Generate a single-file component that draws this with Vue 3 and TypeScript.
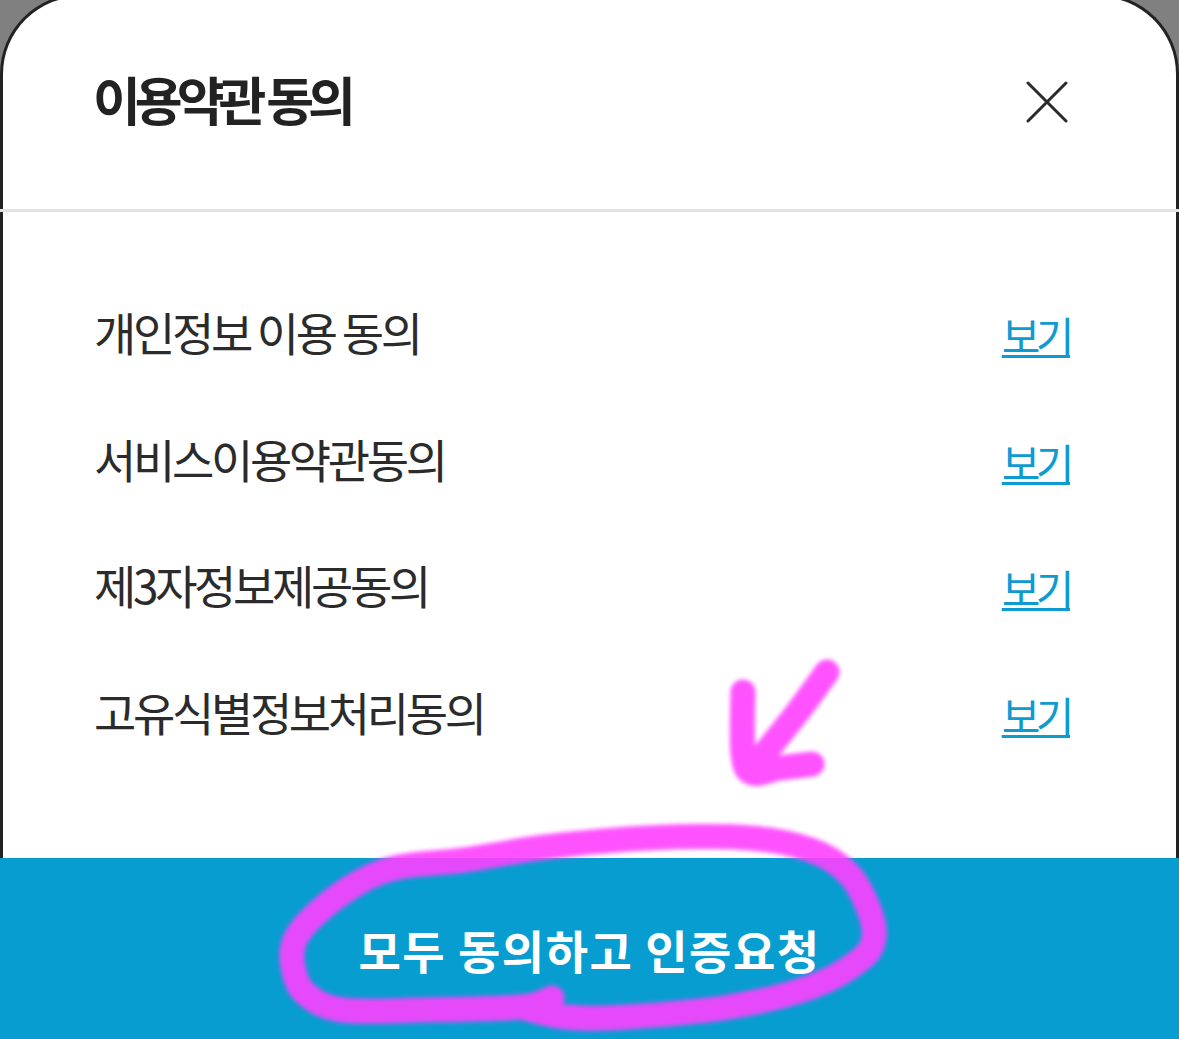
<script setup lang="ts">
type Pt = [number, number]

const terms: string[] = [
  '개인정보 이용 동의',
  '서비스이용약관동의',
  '제3자정보제공동의',
  '고유식별정보처리동의',
]

function smooth(pts: Pt[]): string {
  let d = `M${pts[0][0]} ${pts[0][1]}`
  for (let i = 0; i < pts.length - 1; i++) {
    const p0 = pts[Math.max(i - 1, 0)]
    const p1 = pts[i]
    const p2 = pts[i + 1]
    const p3 = pts[Math.min(i + 2, pts.length - 1)]
    const c1x = p1[0] + (p2[0] - p0[0]) / 6
    const c1y = p1[1] + (p2[1] - p0[1]) / 6
    const c2x = p2[0] - (p3[0] - p1[0]) / 6
    const c2y = p2[1] - (p3[1] - p1[1]) / 6
    d += ` C${c1x.toFixed(1)} ${c1y.toFixed(1)} ${c2x.toFixed(1)} ${c2y.toFixed(1)} ${p2[0]} ${p2[1]}`
  }
  return d
}

const ring = smooth([
  [552, 998], [521, 1007], [423, 1010], [342, 1010], [305, 993], [293, 967], [295, 940],
  [317, 913], [358, 883], [399, 867], [464, 860], [546, 847], [648, 838], [750, 838],
  [811, 850], [848, 873], [868, 907], [874, 937], [860, 960], [811, 987], [729, 1007],
  [627, 1017], [566, 1017], [521, 1007],
])
const arrowShaft = smooth([[827, 672], [797, 713], [757, 763]])
const arrowHead = smooth([[743, 692], [743, 753], [752, 773], [780, 768], [812, 764]])
</script>

<template>
  <div class="page">
    <section class="sheet">
      <header class="head">
        <h1 class="title">이용약관 동의</h1>
        <button class="close" type="button" aria-label="닫기">
          <svg width="42" height="42" viewBox="0 0 42 42">
            <path d="M2 2 L40 40 M40 2 L2 40" stroke="#2a2a2a" stroke-width="3" stroke-linecap="round" fill="none" />
          </svg>
        </button>
      </header>
      <ul class="list">
        <li v-for="term in terms" :key="term" class="row">
          <span class="label">{{ term }}</span>
          <a class="view">보기</a>
        </li>
      </ul>
    </section>
    <footer class="cta">모두 동의하고 인증요청</footer>

    <svg class="scribble" width="1179" height="1039" viewBox="0 0 1179 1039">
      <defs>
        <filter id="soft" x="-5%" y="-5%" width="110%" height="110%">
          <feGaussianBlur stdDeviation="2" />
        </filter>
      </defs>
      <g filter="url(#soft)" fill="none" stroke="#ff40ff" stroke-linecap="round" stroke-linejoin="round" opacity="0.9">
        <path :d="ring" stroke-width="25" />
        <path :d="arrowShaft" stroke-width="25" />
        <path :d="arrowHead" stroke-width="25" />
      </g>
    </svg>
  </div>
</template>

<style scoped>
.page {
  position: relative;
  height: 1039px;
  overflow: hidden;
  display: flex;
  flex-direction: column;
  background: #808080;
  font-family: "Noto Sans CJK KR", "Noto Sans", sans-serif;
}
.sheet {
  flex: 1;
  margin-top: -6px;
  background: #fff;
  border: 3px solid #222;
  border-bottom: none;
  border-radius: 80px 80px 0 0;
}
.head {
  height: 209px;
  box-sizing: content-box;
  margin: 0 -3px;
  padding: 0 111px 3px 93px;
  border-bottom: 3px solid #e2e2e2;
  display: flex;
  align-items: center;
  justify-content: space-between;
}
.title {
  margin: 0 0 5px;
  font-size: 52px;
  font-weight: 700;
  letter-spacing: -6px;
  line-height: 1;
  color: #222;
}
.close {
  padding: 0;
  border: 0;
  background: none;
  display: flex;
}
.list {
  list-style: none;
  margin: 0;
  padding: 60px 106px 0 91px;
}
.row {
  height: 126.5px;
  display: flex;
  align-items: center;
  justify-content: space-between;
}
.label {
  font-size: 46px;
  letter-spacing: -3.35px;
  color: #2b2b2b;
  line-height: 1;
  margin-bottom: 8px;
}
.view {
  font-size: 42px;
  letter-spacing: -4.5px;
  color: #0d9bd0;
  text-decoration: underline;
  text-decoration-thickness: 3px;
  line-height: 1;
}
.cta {
  height: 181px;
  flex: none;
  background: #089dd1;
  color: #fff;
  font-size: 46px;
  font-weight: 700;
  letter-spacing: 1.5px;
  display: flex;
  align-items: center;
  justify-content: center;
}
.scribble {
  position: absolute;
  left: 0;
  top: 0;
  pointer-events: none;
}
</style>
